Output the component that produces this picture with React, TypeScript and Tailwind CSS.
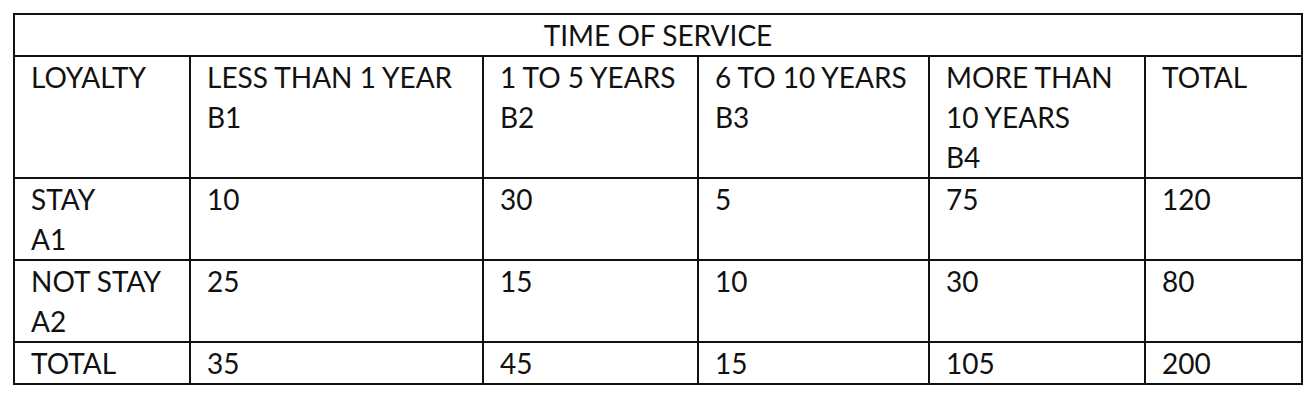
import React from 'react';

const cols = [176, 293, 215, 231, 216, 157];

const rows: { label: string[]; cells: string[] }[] = [
  { label: ['STAY', 'A1'], cells: ['10', '30', '5', '75', '120'] },
  { label: ['NOT STAY', 'A2'], cells: ['25', '15', '10', '30', '80'] },
  { label: ['TOTAL'], cells: ['35', '45', '15', '105', '200'] },
];

const headers: string[][] = [
  ['LESS THAN 1 YEAR', 'B1'],
  ['1 TO 5 YEARS', 'B2'],
  ['6 TO 10 YEARS', 'B3'],
  ['MORE THAN', '10 YEARS', 'B4'],
  ['TOTAL'],
];

function Cell({ lines }: { lines: string[] }) {
  return (
    <td className="border-2 border-[#111] pl-[16px] pr-1 py-0 align-top">
      {lines.map((l) => (
        <div key={l} className="whitespace-nowrap">
          {l}
        </div>
      ))}
    </td>
  );
}

export default function App() {
  return (
    <div className="bg-white w-[1316px] h-[404px] pt-[13px] pl-[13px]">
      <table
        className="table-fixed border-collapse text-[28px] leading-[40px] text-[#111]"
        style={{ fontFamily: 'Lato, "Open Sans", sans-serif', width: 1290 }}
      >
        <colgroup>
          {cols.map((w, i) => (
            <col key={i} style={{ width: w }} />
          ))}
        </colgroup>
        <tbody>
          <tr>
            <td colSpan={6} className="border-2 border-[#111] text-center py-0">
              TIME OF SERVICE
            </td>
          </tr>
          <tr>
            <Cell lines={['LOYALTY']} />
            {headers.map((h, i) => (
              <Cell key={i} lines={h} />
            ))}
          </tr>
          {rows.map((r) => (
            <tr key={r.label[0]}>
              <Cell lines={r.label} />
              {r.cells.map((c, i) => (
                <Cell key={i} lines={[c]} />
              ))}
            </tr>
          ))}
        </tbody>
      </table>
    </div>
  );
}
